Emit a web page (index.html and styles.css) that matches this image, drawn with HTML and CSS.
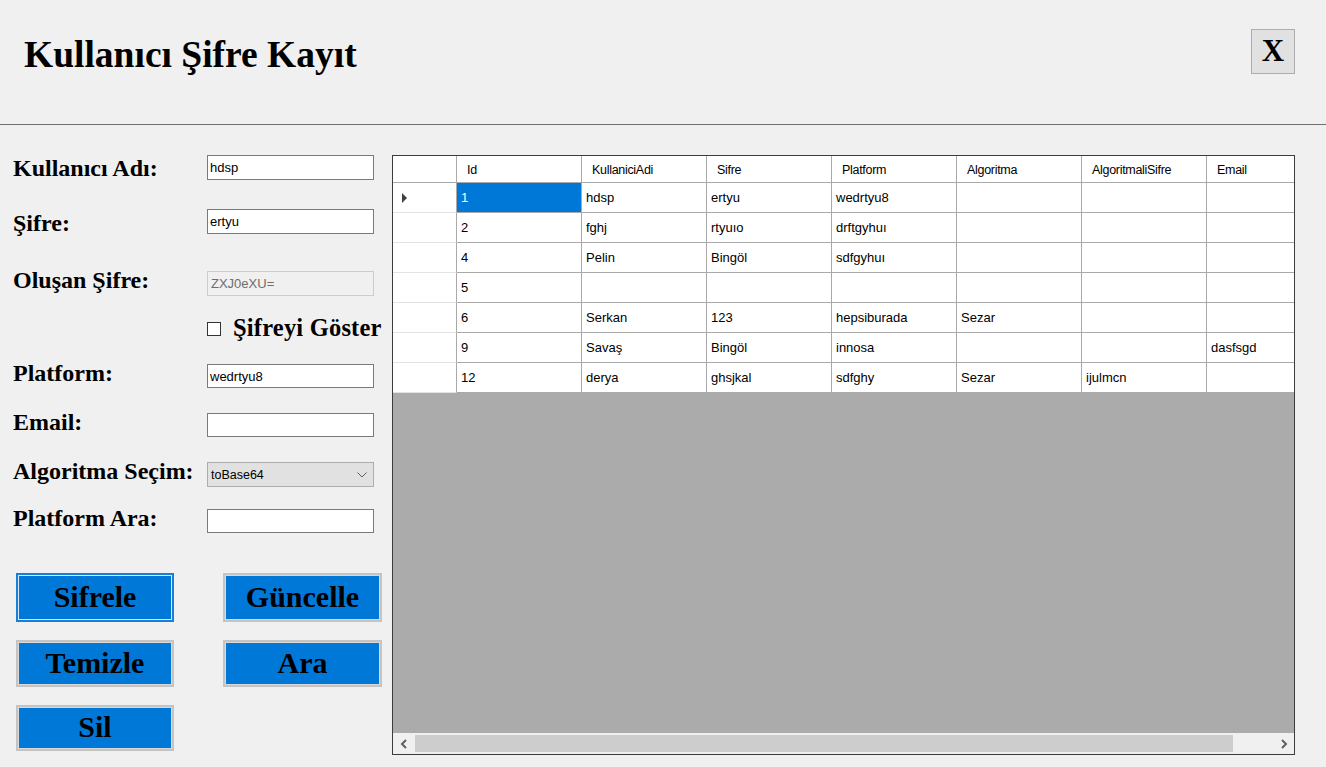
FILE: index.html
```html
<!DOCTYPE html>
<html lang="tr">
<head>
<meta charset="utf-8">
<title>Kullanıcı Şifre Kayıt</title>
<link rel="stylesheet" href="styles.css">
</head>
<body>
<div class="window">
  <header class="topbar">
    <h1 class="title">Kullanıcı Şifre Kayıt</h1>
    <div class="close">X</div>
  </header>
  <main class="content">
    <section class="form">
      <div class="row r-user"><div class="lbl lbl-user">Kullanıcı Adı:</div><div class="field">hdsp</div></div>
      <div class="row r-pass"><div class="lbl lbl-pass">Şifre:</div><div class="field">ertyu</div></div>
      <div class="row r-gen"><div class="lbl">Oluşan Şifre:</div><div class="field field-disabled">ZXJ0eXU=</div></div>
      <div class="row r-check"><span class="checkbox"></span><span class="check-text">Şifreyi Göster</span></div>
      <div class="row r-platform"><div class="lbl">Platform:</div><div class="field field-s">wedrtyu8</div></div>
      <div class="row r-email"><div class="lbl">Email:</div><div class="field field-s"></div></div>
      <div class="row r-algo"><div class="lbl">Algoritma Seçim:</div>
        <div class="combo"><span>toBase64</span>
          <svg class="combo-arrow" width="10" height="6" viewBox="0 0 10 6"><polyline points="0.5,0.5 5,5 9.5,0.5" fill="none" stroke="#606060" stroke-width="1"/></svg>
        </div>
      </div>
      <div class="row r-search"><div class="lbl">Platform Ara:</div><div class="field field-s"></div></div>
      <div class="buttons">
        <div class="btn btn-focus">Sifrele</div>
        <div class="btn">Güncelle</div>
        <div class="btn btn-mid">Temizle</div>
        <div class="btn btn-mid">Ara</div>
        <div class="btn btn-last">Sil</div>
      </div>
    </section>
    <section class="grid">
      <div class="grid-body">
        <div class="dgv">
          <div class="dgv-row dgv-head">
            <div class="rh"></div>
            <div class="ch">Id</div>
            <div class="ch">KullaniciAdi</div>
            <div class="ch">Sifre</div>
            <div class="ch">Platform</div>
            <div class="ch">Algoritma</div>
            <div class="ch">AlgoritmaliSifre</div>
            <div class="ch">Email</div>
          </div>
          <div class="dgv-row">
            <div class="rh"><span class="current"></span></div>
            <div class="cell selected">1</div><div class="cell">hdsp</div><div class="cell">ertyu</div><div class="cell">wedrtyu8</div><div class="cell"></div><div class="cell"></div><div class="cell"></div>
          </div>
          <div class="dgv-row">
            <div class="rh"></div>
            <div class="cell">2</div><div class="cell">fghj</div><div class="cell">rtyuıo</div><div class="cell">drftgyhuı</div><div class="cell"></div><div class="cell"></div><div class="cell"></div>
          </div>
          <div class="dgv-row">
            <div class="rh"></div>
            <div class="cell">4</div><div class="cell">Pelin</div><div class="cell">Bingöl</div><div class="cell">sdfgyhuı</div><div class="cell"></div><div class="cell"></div><div class="cell"></div>
          </div>
          <div class="dgv-row">
            <div class="rh"></div>
            <div class="cell">5</div><div class="cell"></div><div class="cell"></div><div class="cell"></div><div class="cell"></div><div class="cell"></div><div class="cell"></div>
          </div>
          <div class="dgv-row">
            <div class="rh"></div>
            <div class="cell">6</div><div class="cell">Serkan</div><div class="cell">123</div><div class="cell">hepsiburada</div><div class="cell">Sezar</div><div class="cell"></div><div class="cell"></div>
          </div>
          <div class="dgv-row">
            <div class="rh"></div>
            <div class="cell">9</div><div class="cell">Savaş</div><div class="cell">Bingöl</div><div class="cell">innosa</div><div class="cell"></div><div class="cell"></div><div class="cell">dasfsgd</div>
          </div>
          <div class="dgv-row">
            <div class="rh"></div>
            <div class="cell">12</div><div class="cell">derya</div><div class="cell">ghsjkal</div><div class="cell">sdfghy</div><div class="cell">Sezar</div><div class="cell">ijulmcn</div><div class="cell"></div>
          </div>
        </div>
      </div>
      <div class="hscroll">
        <div class="sb-arrow">
          <svg width="8" height="10" viewBox="0 0 8 10"><polyline points="6,1 2,5 6,9" fill="none" stroke="#606060" stroke-width="2"/></svg>
        </div>
        <div class="sb-thumb"></div>
        <div class="sb-space"></div>
        <div class="sb-arrow">
          <svg width="8" height="10" viewBox="0 0 8 10"><polyline points="2,1 6,5 2,9" fill="none" stroke="#606060" stroke-width="2"/></svg>
        </div>
      </div>
    </section>
  </main>
</div>
</body>
</html>
```
FILE: styles.css
```css
html, body {
  margin: 0;
  padding: 0;
}
body {
  background: #f0f0f0;
  font-family: "Liberation Serif", "Times New Roman", serif;
  color: #000;
}
.window {
  width: 1326px;
  height: 767px;
  overflow: hidden;
}

/* ---------- top bar ---------- */
.topbar {
  height: 125px;
  box-sizing: border-box;
  border-bottom: 1px solid #6e6e6e;
  display: flex;
  justify-content: space-between;
  align-items: flex-start;
  padding: 0 31px 0 24px;
}
.title {
  margin: 33px 0 0;
  font-size: 37.5px;
  font-weight: bold;
  line-height: normal;
}
.close {
  margin-top: 29px;
  width: 44px;
  height: 45px;
  box-sizing: border-box;
  background: #e1e1e1;
  border: 1px solid #adadad;
  font-weight: bold;
  font-size: 31px;
  display: flex;
  align-items: center;
  justify-content: center;
  padding-bottom: 2px;
}

/* ---------- content ---------- */
.content {
  display: flex;
  align-items: flex-start;
}
.form {
  width: 379px;
  padding-left: 13px;
}
.row {
  display: flex;
  align-items: center;
  height: 25px;
}
.r-user { margin-top: 30px; }
.r-pass { margin-top: 29px; }
.r-gen { margin-top: 37px; }
.r-check { margin-top: 20px; height: 24px; padding-left: 194px; }
.r-platform { margin-top: 24px; height: 24px; }
.r-email { margin-top: 25px; height: 24px; }
.r-algo { margin-top: 25px; }
.r-search { margin-top: 22px; height: 24px; }

.lbl {
  width: 194px;
  flex: none;
  font-size: 24px;
  font-weight: bold;
  line-height: 28px;
  white-space: nowrap;
  margin-bottom: 7px;
}
.lbl-user { margin-bottom: 0; }
.lbl-pass { margin-bottom: -3px; }

.field {
  width: 167px;
  height: 100%;
  box-sizing: border-box;
  border: 1px solid #7a7a7a;
  background: #fff;
  font-family: "Liberation Sans", Arial, sans-serif;
  font-size: 13px;
  padding-left: 2px;
  display: flex;
  align-items: center;
}
.field-disabled {
  background: #f0f0f0;
  border-color: #cccccc;
  color: #6d6d6d;
  padding-left: 3px;
}
.combo {
  width: 167px;
  height: 100%;
  box-sizing: border-box;
  border: 1px solid #adadad;
  background: #e1e1e1;
  font-family: "Liberation Sans", Arial, sans-serif;
  font-size: 12.5px;
  padding: 0 6px 0 3px;
  display: flex;
  align-items: center;
  justify-content: space-between;
}
.checkbox {
  width: 14px;
  height: 14px;
  box-sizing: border-box;
  border: 1px solid #333;
  background: #fff;
  flex: none;
  margin-top: 1px;
}
.check-text {
  margin-left: 12px;
  font-size: 24.5px;
  font-weight: bold;
  line-height: 28px;
  letter-spacing: 0.2px;
  white-space: nowrap;
}

/* ---------- buttons ---------- */
.buttons {
  margin-top: 40px;
  margin-left: 3px;
  display: grid;
  grid-template-columns: 158px 159px;
  grid-template-rows: 49px 47px 46px;
  column-gap: 49px;
  row-gap: 18px;
}
.btn {
  box-sizing: border-box;
  background: #0078d7;
  border: 2px solid #c4c4c4;
  box-shadow: inset 0 0 0 1px #d9d9d9;
  font-size: 30px;
  font-weight: bold;
  display: flex;
  align-items: center;
  justify-content: center;
  padding-bottom: 2px;
}
.btn-focus {
  border-color: #1a7fd9;
  box-shadow: inset 0 0 0 1px #d8e8f6;
}

/* ---------- data grid ---------- */
.grid {
  margin-top: 30px;
  width: 903px;
  height: 600px;
  box-sizing: border-box;
  border: 1px solid #3c3c3c;
  background: #ababab;
  display: flex;
  flex-direction: column;
}
.grid-body {
  flex: 1;
  overflow: hidden;
}
.dgv {
  width: 939px;
  font-family: "Liberation Sans", Arial, sans-serif;
  font-size: 13px;
}
.dgv-row {
  display: grid;
  grid-template-columns: 64px repeat(7, 125px);
  height: 30px;
}
.dgv-head {
  height: 27px;
}
.rh, .ch, .cell {
  box-sizing: border-box;
  background: #fff;
  border-right: 1px solid #a9a9a9;
  border-bottom: 1px solid #a9a9a9;
  display: flex;
  align-items: center;
  white-space: nowrap;
  overflow: hidden;
}
.rh {
  border-bottom-color: #e3e3e3;
}
.dgv-head .rh {
  border-bottom-color: #a9a9a9;
}
.ch {
  font-size: 12.5px;
  letter-spacing: -0.3px;
  padding-left: 10px;
  padding-top: 1px;
}
.cell {
  padding-left: 4px;
}
.cell.selected {
  background: #0078d7;
  color: #fff;
}
.current {
  width: 0;
  height: 0;
  margin-left: 9px;
  border-left: 5px solid #404040;
  border-top: 5px solid transparent;
  border-bottom: 5px solid transparent;
}

/* ---------- scrollbar ---------- */
.hscroll {
  height: 21px;
  flex: none;
  background: #f0f0f0;
  display: flex;
  align-items: center;
}
.sb-arrow {
  width: 21px;
  height: 21px;
  display: flex;
  align-items: center;
  justify-content: center;
}
.sb-thumb {
  width: 818px;
  height: 17px;
  margin-left: 1px;
  background: #cdcdcd;
}
.sb-space {
  flex: 1;
}
```
